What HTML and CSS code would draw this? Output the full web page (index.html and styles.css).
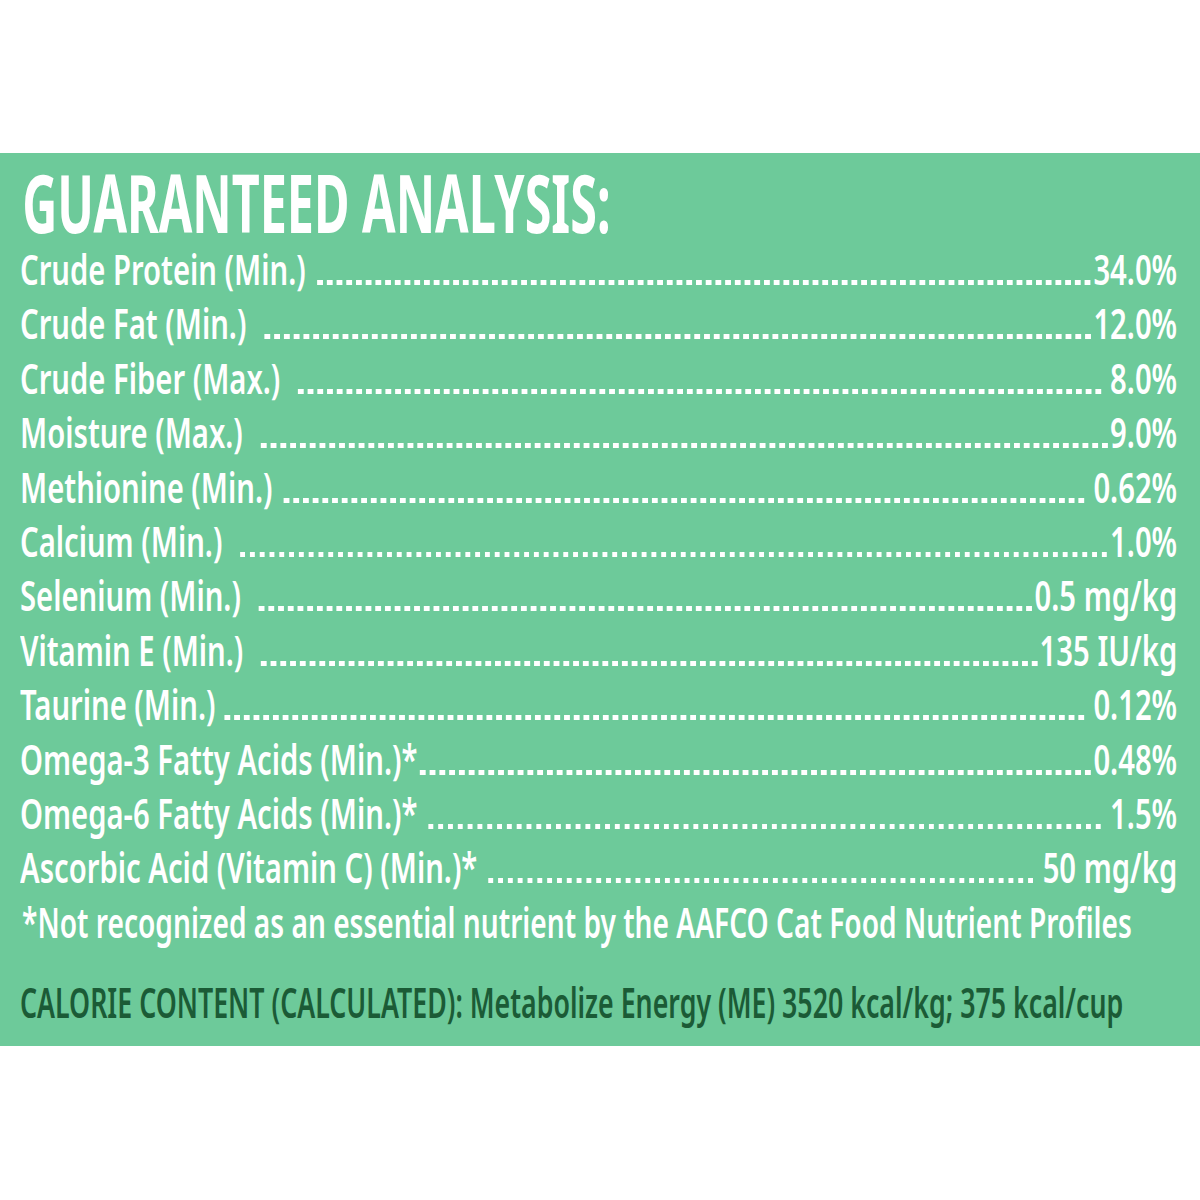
FILE: index.html
```html
<!DOCTYPE html>
<html lang="en">
<head>
<meta charset="utf-8">
<title>Guaranteed Analysis</title>
<link rel="stylesheet" href="styles.css">
</head>
<body>
<section class="panel">
  <div class="scaler">
    <h1 class="title"><span class="title-text">GUARANTEED ANALYSIS:</span></h1>
    <div class="rows">
      <div class="row"><span class="label">Crude Protein (Min.)</span><span class="dots"></span><span class="val">34.0%</span></div>
      <div class="row"><span class="label">Crude Fat (Min.)</span><span class="dots wide"></span><span class="val">12.0%</span></div>
      <div class="row"><span class="label">Crude Fiber (Max.)</span><span class="dots wide"></span><span class="val sp">8.0%</span></div>
      <div class="row"><span class="label">Moisture (Max.)</span><span class="dots wide"></span><span class="val">9.0%</span></div>
      <div class="row"><span class="label">Methionine (Min.)</span><span class="dots"></span><span class="val sp">0.62%</span></div>
      <div class="row"><span class="label">Calcium (Min.)</span><span class="dots wide"></span><span class="val">1.0%</span></div>
      <div class="row"><span class="label">Selenium (Min.)</span><span class="dots wide"></span><span class="val">0.5 mg/kg</span></div>
      <div class="row"><span class="label">Vitamin E (Min.)</span><span class="dots wide"></span><span class="val">135 IU/kg</span></div>
      <div class="row"><span class="label">Taurine (Min.)</span><span class="dots tight"></span><span class="val sp">0.12%</span></div>
      <div class="row"><span class="label">Omega-3 Fatty Acids (Min.)*</span><span class="dots none"></span><span class="val">0.48%</span></div>
      <div class="row"><span class="label">Omega-6 Fatty Acids (Min.)*</span><span class="dots"></span><span class="val sp">1.5%</span></div>
      <div class="row"><span class="label">Ascorbic Acid (Vitamin C) (Min.)*</span><span class="dots"></span><span class="val sp">50 mg/kg</span></div>
    </div>
    <p class="note">*Not recognized as an essential nutrient by the AAFCO Cat Food Nutrient Profiles</p>
    <p class="calorie">CALORIE CONTENT (CALCULATED): Metabolize Energy (ME) 3520 kcal/kg; 375 kcal/cup</p>
  </div>
</section>
</body>
</html>
```

FILE: styles.css
```css
html, body {
  margin: 0;
  padding: 0;
  background: #ffffff;
  overflow: hidden;
}

body {
  width: 1200px;
  height: 1200px;
  font-family: "Noto Sans", "DejaVu Sans", sans-serif;
}

.panel {
  margin-top: 153px;
  height: 893px;
  box-sizing: border-box;
  background: #6dca9a;
  padding: 0 0 0 20px;
  color: #ffffff;
  overflow: hidden;
}

/* the label font is a narrow condensed face: draw a regular face and squeeze it */
.scaler {
  width: 1623px;
  transform: scaleX(0.713);
  transform-origin: left top;
}

.title {
  margin: 0;
  padding: 8px 0 0 3px;
  font-size: 80px;
  font-weight: 700;
  line-height: 81px;
  height: 81px;
  white-space: nowrap;
}

.title-text {
  display: inline-block;
  transform: scaleX(0.85);
  transform-origin: left center;
}

.rows {
  display: flex;
  flex-direction: column;
}

.row {
  display: flex;
  align-items: baseline;
  font-size: 41px;
  font-weight: 600;
  line-height: 54.4px;
  white-space: nowrap;
}

.label {
  flex: none;
}

.dots {
  flex: 1;
  display: inline-block;
  height: 5px;
  margin-left: 13px;
  background-image: linear-gradient(to right,
    transparent 0, transparent 3.3px,
    #ffffff 3.3px, #ffffff 10.3px,
    transparent 10.3px, transparent 13.6px);
  background-size: 13.6px 5px;
  background-repeat: space no-repeat;
  background-position: left bottom;
}

.dots.wide { margin-left: 22px; }
.dots.tight { margin-left: 10px; }
.dots.none { margin-left: 1px; }

.val {
  flex: none;
  margin-left: 0;
}

.val.sp { margin-left: 9px; }

.note {
  margin: 0;
  padding-left: 3px;
  font-size: 41px;
  font-weight: 600;
  line-height: 54.4px;
  white-space: nowrap;
  transform: scaleX(0.962);
  transform-origin: left center;
}

.calorie {
  margin: 26px 0 0 0;
  font-size: 41px;
  font-weight: 600;
  line-height: 54.4px;
  color: #1b5b36;
  white-space: nowrap;
  transform: scaleX(0.915);
  transform-origin: left center;
}
```
